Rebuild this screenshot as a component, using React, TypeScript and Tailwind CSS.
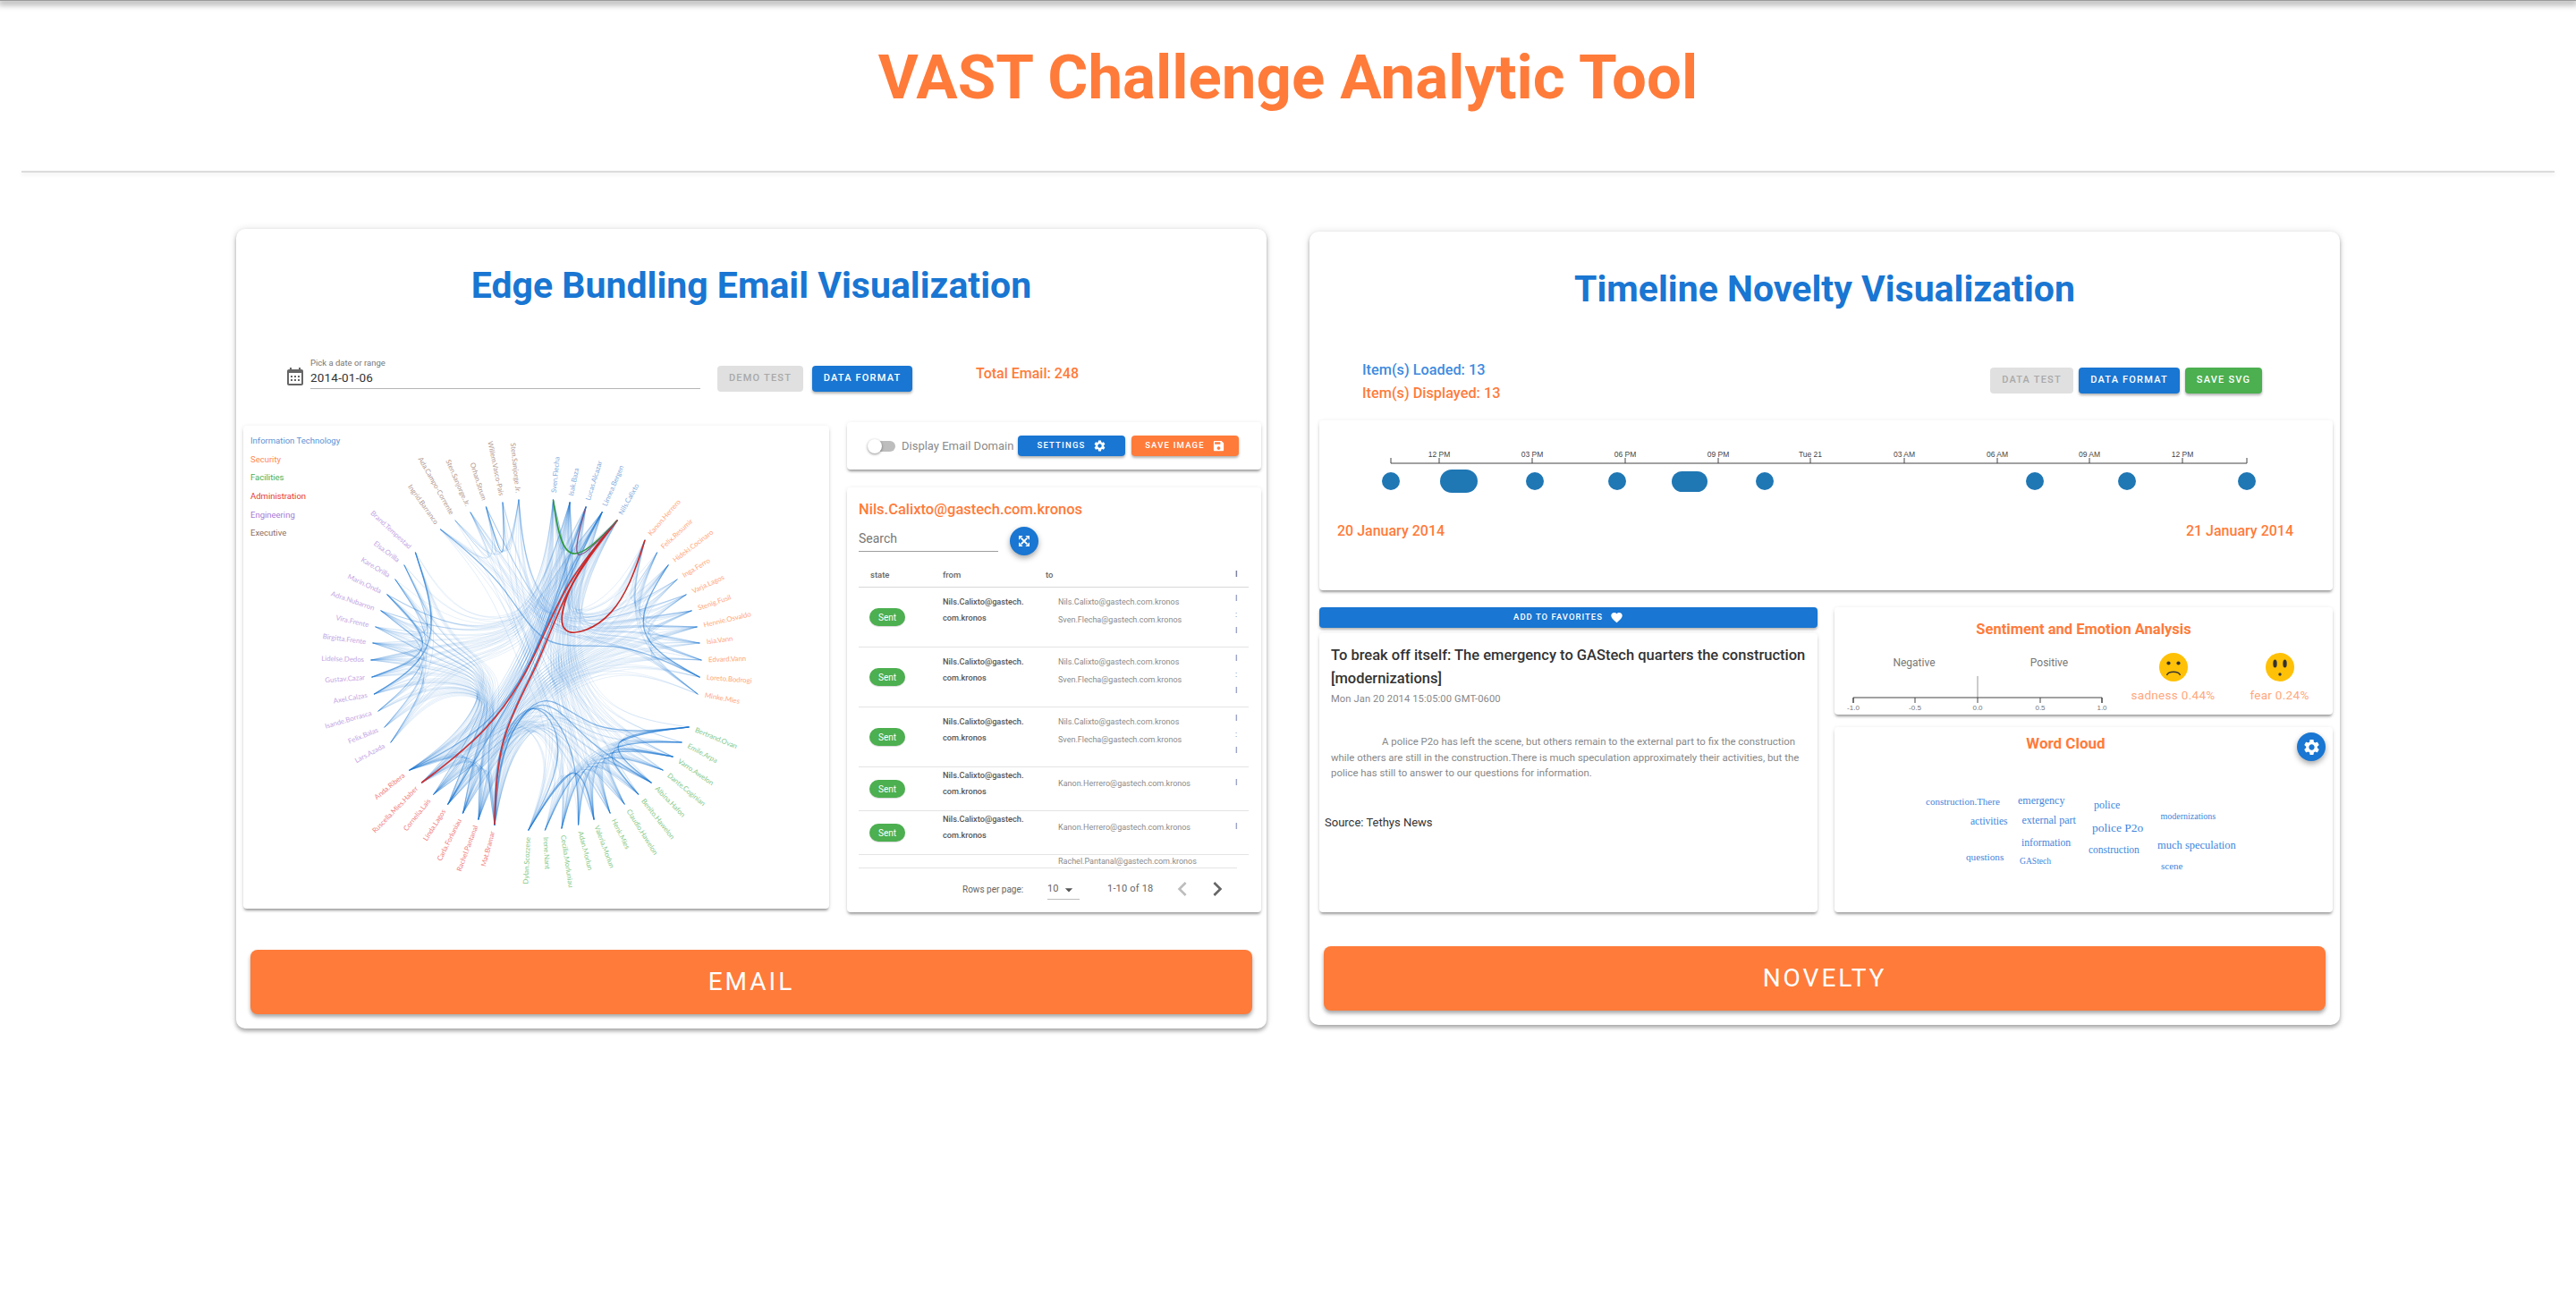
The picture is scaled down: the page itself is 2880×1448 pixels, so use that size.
import React from "react";

const PANEL = "bg-white rounded-[4px] shadow-[0_3px_3px_-1px_rgba(0,0,0,0.35),0_1px_5px_0_rgba(0,0,0,0.1)]";
const CARD = "bg-white rounded-[10px] w-[1152px] shrink-0 flex flex-col shadow-[0_3px_4px_0_rgba(0,0,0,0.3),0_0_8px_0_rgba(0,0,0,0.12)]";
const BTN = "flex items-center justify-center rounded-[4px] uppercase font-medium text-white text-[11px] tracking-[1.2px] shadow-[0_2px_3px_0_rgba(0,0,0,0.3)]";
const BIG = "mx-4 h-[72px] rounded-[8px] bg-[#ff7b3a] text-white flex items-center justify-center text-[28px] tracking-[3px] uppercase shadow-[0_3px_4px_0_rgba(0,0,0,0.35)]";
const DISABLED = "flex items-center justify-center rounded-[4px] uppercase font-medium text-[#a9a9a9] bg-[#e0e0e0] text-[11px] tracking-[1.2px]";

const GEAR = "M19.14 12.94c.04-.3.06-.61.06-.94 0-.32-.02-.64-.07-.94l2.03-1.58c.18-.14.23-.41.12-.61l-1.92-3.32c-.12-.22-.37-.29-.59-.22l-2.39.96c-.5-.38-1.03-.7-1.62-.94l-.36-2.54c-.04-.24-.24-.41-.48-.41h-3.84c-.24 0-.43.17-.47.41l-.36 2.54c-.59.24-1.13.57-1.62.94l-2.39-.96c-.22-.08-.47 0-.59.22L2.74 8.87c-.12.21-.08.47.12.61l2.03 1.58c-.05.3-.09.63-.09.94s.02.64.07.94l-2.03 1.58c-.18.14-.23.41-.12.61l1.92 3.32c.12.22.37.29.59.22l2.39-.96c.5.38 1.03.7 1.62.94l.36 2.54c.05.24.24.41.48.41h3.84c.24 0 .44-.17.47-.41l.36-2.54c.59-.24 1.13-.56 1.62-.94l2.39.96c.22.08.47 0 .59-.22l1.92-3.32c.12-.22.07-.47-.12-.61l-2.01-1.58zM12 15.6c-1.98 0-3.6-1.62-3.6-3.6s1.62-3.6 3.6-3.6 3.6 1.62 3.6 3.6-1.62 3.6-3.6 3.6z";
const Icon = ({ d, className }: { d: string; className: string }) => (
  <svg viewBox="0 0 24 24" className={className} fill="currentColor"><path d={d} /></svg>
);

type N = [string, number, number];
const GROUPS: { key: string; label: string; legend: string; color: string; nodes: N[] }[] = [
  { key: "it", label: "Information Technology", legend: "#5b93d6", color: "#84abdc", nodes: [["Sven.Flecha", 618.5, 559], ["Isak.Baza", 637, 562], ["Lucas.Alcazar", 655, 567], ["Linnea.Bergen", 673, 573], ["Nils.Calixto", 690, 582]] },
  { key: "sec", label: "Security", legend: "#ff8a50", color: "#ffa77c", nodes: [["Kanon.Herrero", 721, 604], ["Felix.Resumir", 734.5, 618], ["Hideki.Cocinaro", 747, 632], ["Inga.Ferro", 757, 648], ["Varja.Lagos", 767, 665], ["Stenig.Fusil", 773, 683], ["Hennie.Osvaldo", 779, 701], ["Isia.Vann", 782, 719], ["Edvard.Vann", 784, 738], ["Loreto.Bodrogi", 782, 757], ["Minke.Mies", 780, 776]] },
  { key: "fac", label: "Facilities", legend: "#4caf50", color: "#85c987", nodes: [["Bertrand.Ovan", 770, 813], ["Emile.Arpa", 762, 830], ["Varro.Awelon", 752, 846], ["Dante.Coginian", 741, 861], ["Albina.Hafon", 728, 875], ["Benito.Hawelon", 713.6, 888], ["Claudio.Hawelon", 698, 899], ["Henk.Mies", 682, 909], ["Valeria.Morlun", 664, 916], ["Adan.Morlun", 646.6, 922], ["Cecilia.Morluniau", 628, 926], ["Irene.Nant", 609.5, 928], ["Dylan.Scozzese", 591, 928]] },
  { key: "adm", label: "Administration", legend: "#e53935", color: "#f08080", nodes: [["Mat.Bramar", 553, 922], ["Rachel.Pantanal", 535, 916], ["Carla.Forluniau", 517.6, 909], ["Linda.Lagos", 501, 899], ["Cornelia.Lais", 485, 888], ["Ruscella.Mies.Haber", 471.6, 875], ["Anda.Ribera", 458, 861]] },
  { key: "eng", label: "Engineering", legend: "#a57bd6", color: "#c3a5e3", nodes: [["Lars.Azada", 437, 830], ["Felix.Balas", 430, 813], ["Isande.Borrasca", 423, 795], ["Axel.Calzas", 418.5, 776], ["Gustav.Cazar", 416, 757], ["Lidelse.Dedos", 415, 738], ["Birgitta.Frente", 417, 719], ["Vira.Frente", 420, 701], ["Adra.Nubarron", 426, 683], ["Marin.Onda", 433, 665], ["Kare.Orilla", 442, 648], ["Elsa.Orilla", 452, 632], ["Brand.Tempestad", 464.5, 618]] },
  { key: "exe", label: "Executive", legend: "#8d6e63", color: "#b39a90", nodes: [["Ingrid.Barranco", 492.6, 592], ["Ada.Campo-Corrente", 509, 582], ["Sten.Sanjorge.Jr.", 526, 573], ["Orhan.Strum", 543.5, 567], ["Willem.Vasco-Pais", 562, 562], ["Sten.Sanjorge Jr.", 580, 559]] },
];

const CX = 600, CY = 743;
type P = [number, number];
const hubs: Record<string, P> = {};
GROUPS.forEach((g) => {
  let sx = 0, sy = 0;
  g.nodes.forEach((n) => { const a = Math.atan2(n[2] - CY, n[1] - CX); sx += Math.cos(a); sy += Math.sin(a); });
  const a = Math.atan2(sy, sx);
  hubs[g.key] = [CX + Math.cos(a) * 92, CY + Math.sin(a) * 92];
});

function bundlePath(raw: P[], beta = 0.85) {
  const n = raw.length - 1;
  const [ax, ay] = raw[0];
  const dx = raw[n][0] - ax, dy = raw[n][1] - ay;
  const p: P[] = raw.map((q, i) => [beta * q[0] + (1 - beta) * (ax + (i * dx) / n), beta * q[1] + (1 - beta) * (ay + (i * dy) / n)]);
  const f = (v: number) => v.toFixed(1);
  let d = `M${f(p[0][0])} ${f(p[0][1])}L${f((5 * p[0][0] + p[1][0]) / 6)} ${f((5 * p[0][1] + p[1][1]) / 6)}`;
  const seg = (a: P, b: P, c: P) => {
    d += `C${f((2 * a[0] + b[0]) / 3)} ${f((2 * a[1] + b[1]) / 3)} ${f((a[0] + 2 * b[0]) / 3)} ${f((a[1] + 2 * b[1]) / 3)} ${f((a[0] + 4 * b[0] + c[0]) / 6)} ${f((a[1] + 4 * b[1] + c[1]) / 6)}`;
  };
  for (let i = 2; i <= n; i++) seg(p[i - 2], p[i - 1], p[i]);
  seg(p[n - 1], p[n], p[n]);
  d += `L${f(p[n][0])} ${f(p[n][1])}`;
  return d;
}

const byKey = Object.fromEntries(GROUPS.map((g) => [g.key, g]));
function link(ag: string, ai: number, bg: string, bi: number, beta = 0.85) {
  const a = byKey[ag].nodes[ai], b = byKey[bg].nodes[bi];
  const pts: P[] = ag === bg ? [[a[1], a[2]], hubs[ag], [b[1], b[2]]] : [[a[1], a[2]], hubs[ag], [CX, CY], hubs[bg], [b[1], b[2]]];
  return bundlePath(pts, beta);
}

let seed = 17;
const rnd = () => { seed = (seed * 1664525 + 1013904223) % 4294967296; return seed / 4294967296; };
const LINKS: { d: string; w: number; o: number }[] = [];
const addAll = (a: string, b: string, prob: number, o = 0.1) => {
  const A = byKey[a].nodes, B = byKey[b].nodes;
  A.forEach((_, i) => B.forEach((_, j) => {
    if (a === b && j <= i) return;
    if (rnd() < prob) LINKS.push({ d: link(a, i, b, j, a === b ? 0.85 : 0.68), w: 1, o });
  }));
};
addAll("fac", "fac", 0.9, 0.16);
addAll("adm", "adm", 1, 0.2);
addAll("eng", "eng", 0.7, 0.14);
addAll("sec", "sec", 0.7, 0.14);
addAll("it", "it", 1, 0.2);
addAll("eng", "adm", 0.8);
addAll("sec", "adm", 0.8);
addAll("eng", "it", 0.6);
addAll("fac", "it", 0.6);
addAll("fac", "adm", 0.6);
addAll("sec", "it", 0.5);
addAll("exe", "sec", 0.35, 0.12);
addAll("exe", "fac", 0.25, 0.12);
addAll("exe", "exe", 0.4, 0.2);
addAll("adm", "it", 1, 0.18);
const heavy: [string, number, string, number][] = [
  ["it", 3, "adm", 0], ["it", 3, "adm", 5], ["it", 4, "adm", 6], ["it", 2, "adm", 3], ["adm", 0, "fac", 0], ["adm", 0, "fac", 4], ["adm", 0, "fac", 9],
  ["adm", 0, "fac", 12], ["fac", 0, "fac", 4], ["fac", 5, "fac", 2], ["fac", 12, "fac", 8], ["eng", 9, "eng", 4], ["eng", 3, "eng", 12], ["sec", 9, "sec", 2], ["exe", 0, "sec", 9], ["exe", 3, "exe", 4],
];
heavy.forEach(([a, i, b, j]) => LINKS.push({ d: link(a, i, b, j), w: 1.3, o: 0.5 }));

function ChordDiagram() {
  return (
    <svg viewBox="272 476 655 540" className="block w-[655px] h-[540px]">
      <g fill="none" stroke="#1976d2" strokeLinecap="round">
        {LINKS.map((l, i) => <path key={i} d={l.d} strokeWidth={l.w} strokeOpacity={l.o} />)}
      </g>
      <g fill="none">
        <path d={link("it", 4, "adm", 5)} stroke="#d32f2f" strokeWidth="1.6" />
        <path d={link("it", 4, "adm", 0)} stroke="#d32f2f" strokeWidth="1.6" />
        <path d={link("it", 4, "sec", 0)} stroke="#c62828" strokeWidth="1.6" />
        <path d={link("it", 0, "it", 4)} stroke="#2e9a36" strokeWidth="1.5" />
        <path d={link("it", 2, "it", 4)} stroke="#8a4f7c" strokeWidth="1.1" />
      </g>
      <g fontFamily="Lato, sans-serif" fontSize="7.8">
        {GROUPS.map((g) => g.nodes.map((n, i) => {
          const a = Math.atan2(n[2] - CY, n[1] - CX);
          const deg = (a * 180) / Math.PI;
          const right = Math.cos(a) >= 0;
          const x = n[1] + Math.cos(a) * 8, y = n[2] + Math.sin(a) * 8;
          return (
            <text key={g.key + i} fill={g.color} dy="0.3em" textAnchor={right ? "start" : "end"} transform={`translate(${x.toFixed(1)} ${y.toFixed(1)}) rotate(${(right ? deg : deg + 180).toFixed(1)})`}>{n[0]}</text>
          );
        }))}
      </g>
    </svg>
  );
}

const ChipRow = ({ tall, to, marks }: { tall: boolean; to: string[]; marks: string[] }) => (
  <div className={tall ? "flex h-[67px] items-start border-b border-[#e4e4e4]" : "flex h-[49px] items-start border-b border-[#e4e4e4]"}>
    <div className={tall ? "w-[94px] pl-3 pt-[23px]" : "w-[94px] pl-3 pt-[14px]"}>
      <div className="w-10 h-5 rounded-full bg-[#4caf50] text-white text-[10px] flex items-center justify-center shadow-[0_1px_1px_rgba(0,0,0,0.15)]">Sent</div>
    </div>
    <div className={tall ? "w-[129px] pt-[7px] text-[9.2px] leading-[18px] font-medium text-[#555]" : "w-[129px] text-[9.2px] leading-[18px] font-medium text-[#555]"}>
      <div>Nils.Calixto@gastech.</div>
      <div>com.kronos</div>
    </div>
    <div className={tall ? "w-[198px] pt-[6px] text-[9px] leading-[20px] text-[#8a8a8a]" : "w-[198px] pt-2 text-[9px] leading-[20px] text-[#8a8a8a]"}>
      {to.map((t) => <div key={t}>{t}</div>)}
    </div>
    <div className={tall ? "pt-[3px] text-[9px] leading-[18px] text-[#777]" : "pt-2 text-[9px] leading-[18px] text-[#777]"}>
      {marks.map((m, i) => <div key={i}>{m}</div>)}
    </div>
  </div>
);

function EmailCard() {
  const two = ["Nils.Calixto@gastech.com.kronos", "Sven.Flecha@gastech.com.kronos"];
  return (
    <div className={CARD + " mt-[63px] h-[894px]"}>
      <div className="h-[128px] flex items-center justify-center text-[#1976d2] text-[41px] font-bold">Edge Bundling Email Visualization</div>
      <div className="h-[88px] flex items-start pl-[57px]">
        <Icon className="w-6 h-6 mt-[25px] -ml-[3px] mr-[5px] text-[#666]" d="M7 11h2v2H7zm0 4h2v2H7zm4-4h2v2h-2zm0 4h2v2h-2zm4-4h2v2h-2zm0 4h2v2h-2zM5 22h14c1.1 0 2-.9 2-2V6c0-1.1-.9-2-2-2h-1V2h-2v2H8V2H6v2H5c-1.11 0-1.99.9-1.99 2L3 20c0 1.1.89 2 2 2zM5 8h14v12H5V8z" />
        <div className="w-[436px] h-[36px] mt-[15px] border-b border-[#b5b5b5] pt-[1px]">
          <div className="text-[9.5px] leading-[12px] text-[#777]">Pick a date or range</div>
          <div className="text-[13.5px] leading-[20px] text-[#333] tracking-[0.2px]">2014-01-06</div>
        </div>
        <div className={DISABLED + " w-[96px] h-[29px] ml-[19px] mt-[25px]"}>Demo Test</div>
        <div className={BTN + " bg-[#1976d2] w-[112px] h-[29px] ml-[10px] mt-[25px]"}>Data Format</div>
        <div className="ml-[71px] mt-[22px] text-[16px] font-medium text-[#ff7b3a]">Total Email: 248</div>
      </div>
      <div className="flex items-start pl-2 pr-[6px] gap-5 h-[548px]">
        <div className={PANEL + " relative w-[655px] h-[540px] mt-1"}>
          <ChordDiagram />
          <div className="absolute left-2 top-[11px] flex flex-col gap-[8.7px]">
            {GROUPS.map((g) => <div key={g.key} className="text-[9.5px] leading-[12px]" style={{ color: g.legend }}>{g.label}</div>)}
          </div>
        </div>
        <div className="w-[463px] flex flex-col gap-5">
          <div className={PANEL + " h-[53px] flex items-center pl-[23px]"}>
            <div className="relative w-[31px] h-4 mr-[7px]">
              <div className="absolute left-[6px] right-0 top-[2px] h-3 rounded-full bg-[#bdbdbd]"></div>
              <div className="absolute left-0 top-0 w-4 h-4 rounded-full bg-white shadow-[0_1px_3px_rgba(0,0,0,0.45)]"></div>
            </div>
            <div className="text-[13px] text-[#8a8a8a] w-[130px] whitespace-nowrap">Display Email Domain</div>
            <div className={BTN + " bg-[#1976d2] w-[120px] h-[23px] gap-2 !tracking-[1.2px] !text-[9.5px]"}>Settings<Icon className="w-[15px] h-[15px]" d={GEAR} /></div>
            <div className={BTN + " bg-[#ff7b3a] w-[120px] h-[23px] ml-[7px] gap-2 !tracking-[1.2px] !text-[9.5px]"}>Save Image<Icon className="w-[15px] h-[15px]" d="M17 3H5c-1.11 0-2 .9-2 2v14c0 1.1.89 2 2 2h14c1.1 0 2-.9 2-2V7l-4-4zm-5 16c-1.66 0-3-1.34-3-3s1.34-3 3-3 3 1.34 3 3-1.34 3-3 3zm3-10H5V5h10v4z" /></div>
          </div>
          <div className={PANEL + " h-[475px] px-[13px]"}>
            <div className="pt-[13px] text-[16.5px] leading-[24px] font-medium text-[#ff7b3a]">Nils.Calixto@gastech.com.kronos</div>
            <div className="flex items-start mt-[6px] h-[42px]">
              <div className="w-[156px] h-[29px] border-b border-[#9e9e9e] text-[14px] leading-[24px] text-[#777] pt-[2px]">Search</div>
              <div className="ml-[13px] mt-[1px] w-8 h-8 rounded-full bg-[#1976d2] text-white flex items-center justify-center shadow-[0_3px_6px_rgba(0,0,0,0.35)]">
                <svg viewBox="0 0 24 24" className="w-[16px] h-[16px]" fill="currentColor">
                  <path d="M7 7L17 17M17 7L7 17" stroke="currentColor" strokeWidth="3" fill="none" />
                  <path d="M3 3h7L3 10zM21 3v7L14 3zM3 21v-7l7 7zM21 21h-7l7-7z" />
                </svg>
              </div>
            </div>
            <div className="w-[436px]">
              <div className="flex items-center h-[27px] border-b border-[#d8d8d8] text-[9.5px] font-medium text-[#666]">
                <div className="w-[94px] pl-[13px]">state</div>
                <div className="w-[115px]">from</div>
                <div className="w-[212px]">to</div>
                <div className="text-[9px]">I</div>
              </div>
              <ChipRow tall to={two} marks={["I", ":", "I"]} />
              <ChipRow tall to={two} marks={["I", ":", "I"]} />
              <ChipRow tall to={two} marks={["I", ":", "I"]} />
              <ChipRow tall={false} to={["Kanon.Herrero@gastech.com.kronos"]} marks={["I"]} />
              <ChipRow tall={false} to={["Kanon.Herrero@gastech.com.kronos"]} marks={["I"]} />
              <div className="w-[423px] h-[15px] border-b border-[#e4e4e4] pl-[223px] text-[9px] leading-[14px] text-[#8a8a8a]">Rachel.Pantanal@gastech.com.kronos</div>
              <div className="flex items-center h-[46px] text-[10px] text-[#666]">
                <div className="ml-[116px] w-[95px]">Rows per page:</div>
                <div className="relative w-[36px] h-[22px] border-b border-[#bdbdbd] flex items-center justify-between mt-[2px]">
                  <span className="text-[11px]">10</span>
                  <Icon className="w-5 h-5 mr-[2px] text-[#555]" d="M7 10l5 5 5-5z" />
                </div>
                <div className="ml-[31px] w-[60px] text-[11px] tracking-[0.2px]">1-10 of 18</div>
                <Icon className="w-8 h-8 ml-[8px] text-[#bdbdbd]" d="M15.41 7.41L14 6l-6 6 6 6 1.41-1.41L10.83 12z" />
                <Icon className="w-8 h-8 ml-[7px] text-[#666]" d="M10 6L8.59 7.41 13.17 12l-4.58 4.59L10 18l6-6z" />
              </div>
            </div>
          </div>
        </div>
      </div>
      <div className={BIG + " mt-[42px]"}>Email</div>
    </div>
  );
}

const TICKS: [number, string][] = [[1609, "12 PM"], [1713, "03 PM"], [1817, "06 PM"], [1921, "09 PM"], [2024, "Tue 21"], [2129, "03 AM"], [2233, "06 AM"], [2336, "09 AM"], [2440, "12 PM"]];

function Timeline() {
  return (
    <svg viewBox="1475 470 1133 100" className="block w-[1133px] h-[100px]">
      <path d="M1555 512V518H2512V512" fill="none" stroke="#444" strokeWidth="1" />
      {TICKS.map(([x, t]) => (
        <g key={x}>
          <line x1={x} x2={x} y1={512} y2={518} stroke="#444" />
          <text x={x} y={511} textAnchor="middle" fontSize="8.5" fill="#444" fontFamily="Liberation Sans, sans-serif">{t}</text>
        </g>
      ))}
      <g fill="#1f77b4">
        <circle cx={1555} cy={538} r={10} />
        <rect x={1610} y={525} width={42} height={26} rx={13} />
        <circle cx={1716} cy={538} r={10} />
        <circle cx={1808} cy={538} r={10} />
        <rect x={1869} y={527} width={40} height={23} rx={11.5} />
        <circle cx={1973} cy={538} r={10} />
        <circle cx={2275} cy={538} r={10} />
        <circle cx={2378} cy={538} r={10} />
        <circle cx={2512} cy={538} r={10} />
      </g>
    </svg>
  );
}

function SentimentAxis() {
  const ticks: [number, string][] = [[2072, "-1.0"], [2141, "-0.5"], [2211, "0.0"], [2281, "0.5"], [2350, "1.0"]];
  return (
    <svg viewBox="2051 730 320 69" className="block w-[320px] h-[69px] shrink-0">
      <text x={2140} y={745} textAnchor="middle" fontSize="12" fill="#777" fontFamily="Roboto, sans-serif">Negative</text>
      <text x={2291} y={745} textAnchor="middle" fontSize="12" fill="#777" fontFamily="Roboto, sans-serif">Positive</text>
      <line x1={2211} x2={2211} y1={756} y2={780} stroke="#aaa" strokeWidth="1.2" />
      <path d="M2072 786V780H2350V786" fill="none" stroke="#444" />
      {ticks.map(([x, t]) => (
        <g key={x}>
          <line x1={x} x2={x} y1={780} y2={786} stroke="#444" />
          <text x={x} y={794} textAnchor="middle" fontSize="8" fill="#777" fontFamily="Liberation Sans, sans-serif">{t}</text>
        </g>
      ))}
    </svg>
  );
}

const Sad = () => (
  <svg viewBox="0 0 32 32" className="w-8 h-8">
    <circle cx="16" cy="16" r="16" fill="#ffc107" />
    <circle cx="10.5" cy="11.5" r="2.1" fill="#333" />
    <circle cx="21.5" cy="11.5" r="2.1" fill="#333" />
    <path d="M8.5 25c2-5 13-5 15 0" fill="none" stroke="#333" strokeWidth="1.4" />
  </svg>
);
const Fear = () => (
  <svg viewBox="0 0 32 32" className="w-8 h-8">
    <circle cx="16" cy="16" r="16" fill="#ffc107" />
    <ellipse cx="10.5" cy="12" rx="2.2" ry="4.6" fill="#333" />
    <ellipse cx="21.5" cy="12" rx="2.2" ry="4.6" fill="#333" />
    <circle cx="16" cy="24" r="1.7" fill="#333" />
  </svg>
);

const WORDS: [string, number, number, number][] = [
  ["construction.There", 2153, 900, 11], ["emergency", 2256, 899, 12], ["police", 2341, 904, 12], ["modernizations", 2415.5, 916, 10],
  ["activities", 2203, 922, 11.5], ["external part", 2260.5, 921, 12], ["police P2o", 2339, 930, 13.5], ["information", 2260, 946, 11.7],
  ["construction", 2335, 954, 11.5], ["much speculation", 2412, 949, 12.5], ["questions", 2198, 962, 11.2], ["GAStech", 2258, 966, 9.6], ["scene", 2416, 972, 11],
];

function NoveltyCard() {
  return (
    <div className={CARD + " mt-[66px] h-[887px]"}>
      <div className="h-[130px] flex items-center justify-center text-[#1976d2] text-[41px] font-bold">Timeline Novelty Visualization</div>
      <div className="h-[81px] flex items-start pl-[59px]">
        <div className="pt-[12px] text-[16.3px] leading-[26px] font-medium">
          <div className="text-[#3d8be0]">Item(s) Loaded: 13</div>
          <div className="text-[#ff7b3a]">Item(s) Displayed: 13</div>
        </div>
        <div className="ml-auto mr-[87px] mt-[22px] flex gap-[6px]">
          <div className={DISABLED + " w-[93px] h-[29px]"}>Data Test</div>
          <div className={BTN + " bg-[#1976d2] w-[113px] h-[29px]"}>Data Format</div>
          <div className={BTN + " bg-[#4caf50] w-[86px] h-[29px]"}>Save SVG</div>
        </div>
      </div>
      <div className={PANEL + " mx-[11px] mr-2 h-[190px]"}>
        <Timeline />
        <div className="flex justify-between px-5 mr-6 mt-[13px] text-[16px] leading-[22px] font-medium text-[#ff7b3a]">
          <span>20 January 2014</span>
          <span>21 January 2014</span>
        </div>
      </div>
      <div className="flex gap-[19px] ml-[11px] mr-2 mt-[19px]">
        <div className="w-[557px] flex flex-col gap-[6px]">
          <div className={BTN + " bg-[#1976d2] h-[23px] gap-2 !tracking-[1px] !text-[9.5px]"}>Add to favorites<Icon className="w-[15px] h-[15px]" d="M12 21.35l-1.45-1.32C5.4 15.36 2 12.28 2 8.5 2 5.42 4.42 3 7.5 3c1.74 0 3.34.81 4.5 2.09C13.16 3.81 14.76 3 16.5 3 19.58 3 22 5.42 22 8.5c0 3.78-3.4 6.86-8.55 11.54L12 21.35z" /></div>
          <div className={PANEL + " h-[312px] pl-[6px]"}>
            <div className="pl-[7px] pr-2">
              <div className="pt-[12px] text-[16.5px] leading-[26px] font-medium text-[#333]">To break off itself: The emergency to GAStech quarters the construction [modernizations]</div>
              <div className="text-[11.2px] leading-[18px] mt-[1px] text-[#888] tracking-[0.1px]">Mon Jan 20 2014 15:05:00 GMT-0600</div>
              <div className="mt-[30px] text-[11.4px] leading-[17.7px] text-[#888] indent-[57px]">A police P2o has left the scene, but others remain to the external part to fix the construction while others are still in the construction.There is much speculation approximately their activities, but the police has still to answer to our questions for information.</div>
            </div>
            <div className="mt-[36px] text-[13px] leading-[20px] text-[#333]">Source: Tethys News</div>
          </div>
        </div>
        <div className="w-[557px] flex flex-col gap-[14px]">
          <div className={PANEL + " h-[120px] flex flex-col"}>
            <div className="h-[51px] flex items-center justify-center text-[16.5px] font-bold text-[#ff7b3a]">Sentiment and Emotion Analysis</div>
            <div className="flex">
              <SentimentAxis />
              <div className="w-[120px] flex flex-col items-center -ml-[1px]">
                <Sad />
                <div className="mt-[5px] text-[13.5px] leading-[20px] tracking-[0.3px] text-[#ffa77c] whitespace-nowrap">sadness 0.44%</div>
              </div>
              <div className="w-[120px] flex flex-col items-center">
                <Fear />
                <div className="mt-[5px] text-[13.5px] leading-[20px] tracking-[0.3px] text-[#ffa77c] whitespace-nowrap">fear 0.24%</div>
              </div>
            </div>
          </div>
          <div className={PANEL + " relative h-[207px]"}>
            <div className="absolute right-2 top-[6px] w-8 h-8 rounded-full bg-[#1976d2] text-white flex items-center justify-center shadow-[0_3px_6px_rgba(0,0,0,0.35)]">
              <Icon className="w-[21px] h-[21px]" d={GEAR} />
            </div>
            <div className="pr-10 pt-[6px] pb-[2px] text-center text-[17px] leading-[24px] font-bold text-[#ff7b3a]">Word Cloud</div>
            <svg viewBox="2051 845 557 175" className="block w-[557px] h-[175px]">
              <g fontFamily="Liberation Serif, serif" fill="#3f86dc">
                {WORDS.map(([t, x, y, s]) => <text key={t} x={x} y={y} fontSize={s}>{t}</text>)}
              </g>
            </svg>
          </div>
        </div>
      </div>
      <div className={BIG + " mt-[38px] tracking-[3.5px]"}>Novelty</div>
    </div>
  );
}

export default function App() {
  return (
    <div className="relative w-[2880px] h-[1448px] bg-white overflow-hidden font-['Roboto',sans-serif]">
      <div className="h-[1px] bg-[#9a9a9a] shadow-[0_2px_7px_2px_rgba(0,0,0,0.4)]"></div>
      <div className="h-[172px] flex items-center justify-center text-[#ff7b3a] text-[69px] font-bold">VAST Challenge Analytic Tool</div>
      <div className="mx-6 mt-[18px] h-[2px] bg-[#dcdcdc] shadow-[0_2px_5px_rgba(0,0,0,0.1)]"></div>
      <div className="flex justify-center items-start gap-12">
        <EmailCard />
        <NoveltyCard />
      </div>
    </div>
  );
}
